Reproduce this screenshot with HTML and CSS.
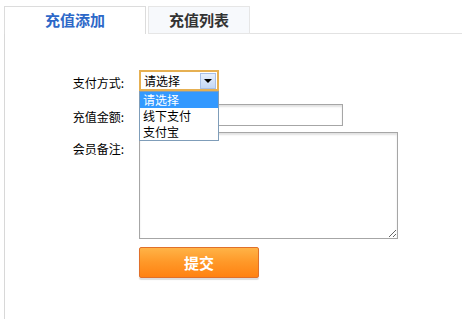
FILE: index.html
```html
<!DOCTYPE html>
<html lang="zh-CN">
<head>
  <meta charset="UTF-8">
  <title>充值添加</title>
  <link rel="stylesheet" href="styles.css">
</head>
<body>
  <div class="wrap">
    <div class="tabs">
      <div class="tab active">充值添加</div>
      <div class="tab">充值列表</div>
      <div class="tab-fill"></div>
    </div>

    <div class="panel">
      <form class="form">
        <label class="lbl">支付方式:</label>
        <div class="field">
          <div class="select">
            <span class="select-text">请选择</span>
            <span class="select-btn"><i class="tri"></i></span>
            <ul class="dropdown">
              <li class="on">请选择</li>
              <li>线下支付</li>
              <li>支付宝</li>
            </ul>
          </div>
        </div>

        <label class="lbl">充值金额:</label>
        <div class="field"><input type="text" class="txt"></div>

        <label class="lbl lbl-top">会员备注:</label>
        <div class="field"><textarea class="area"></textarea></div>

        <div></div>
        <div class="field"><button type="button" class="btn-submit">提交</button></div>
      </form>
    </div>
  </div>
</body>
</html>
```

FILE: styles.css
```css
* { box-sizing: border-box; margin: 0; padding: 0; }
body { font-family: "Noto Sans CJK SC", "Liberation Sans", sans-serif; font-size: 12px; color: #000; background: #fff; }
.wrap { margin: 6px 0 0 4px; }

.tabs { display: flex; height: 28px; }
.tab { height: 28px; line-height: 26px; text-align: center; font-size: 15px; font-weight: bold; color: #333; background: #f7f9fc; border: 1px solid #e6e6e6; }
.tab.active { width: 142px; color: #2d68c8; background: #fff; border-color: #dcdcdc; border-bottom: none; margin-right: 2px; }
.tab + .tab { width: 102px; }
.tab-fill { flex: 1; border-bottom: 1px solid #e2e2e2; }

.panel { border-left: 1px solid #d8d8d8; height: 285px; padding-top: 36px; }

.form { display: grid; grid-template-columns: 119px 1fr; column-gap: 15px; row-gap: 0; }
.lbl { text-align: right; line-height: 21px; padding-top: 2px; }
.lbl:nth-of-type(1) { margin-bottom: 11px; }
.lbl-top { margin-top: 7px; line-height: 16px; }
.field { display: flex; }

.select { position: relative; width: 80px; height: 21px; border: 2px solid #e6b052; background: #fff; display: flex; align-items: center; margin-bottom: 13px; }
.select-text { flex: 1; padding-left: 3px; line-height: 17px; }
.select-btn { width: 16px; height: 16px; margin-right: 1px; border: 1px solid #a8bfe6; background: linear-gradient(#e6effc, #c4d8f6); display: flex; align-items: center; justify-content: center; }
.tri { width: 0; height: 0; border-left: 4px solid transparent; border-right: 4px solid transparent; border-top: 4px solid #000; }

.dropdown { position: absolute; left: -2px; top: 19px; width: 80px; list-style: none; background: #fff; border: 1px solid #7f9db9; z-index: 2; }
.dropdown li { height: 16px; line-height: 16px; padding-left: 3px; }
.dropdown li.on { background: #3399ff; color: #fff; }

.txt { width: 204px; height: 22px; border: 1px solid #a6a6a6; box-shadow: inset 0 2px 2px #e2e2e2; margin-bottom: 6px; }
.area { width: 259px; height: 107px; border: 1px solid #a6a6a6; box-shadow: inset 0 2px 2px #e2e2e2; resize: both; margin-bottom: 8px; font-family: inherit; }

.btn-submit { width: 120px; height: 31px; border: 1px solid #e0702a; border-radius: 2px; background: linear-gradient(#ffb347, #ff9a2a 45%, #ff8212); color: #fff; font-family: inherit; font-size: 15px; font-weight: bold; box-shadow: 0 2px 1px #ddd; cursor: pointer; }
```
